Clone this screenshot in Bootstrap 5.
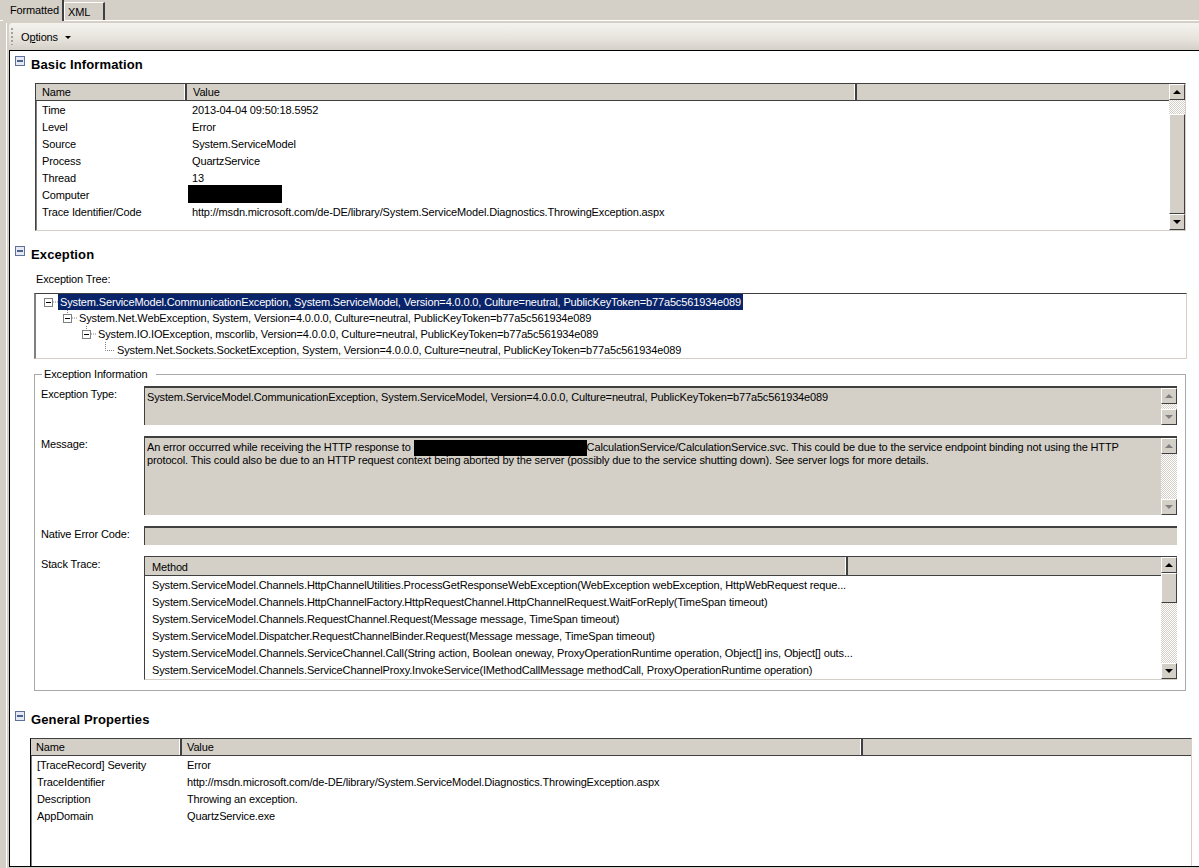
<!DOCTYPE html>
<html lang="en">

<head>
    <meta charset="UTF-8">
    <meta name="viewport" content="width=device-width, initial-scale=1.0">
    <title>Trace Viewer</title>
    <link href="https://cdn.jsdelivr.net/npm/bootstrap@5.3.0/dist/css/bootstrap.min.css" rel="stylesheet">
    <style>
        html, body { height: 100%; }
        body { background: #d4d0c8; color: #000; font-family: "Liberation Sans", Arial, sans-serif; font-size: 11px; letter-spacing: -.14px; line-height: 14px; overflow: hidden; }

        /* tabs and toolbar */
        .tab-strip { height: 21px; padding-left: 3px; border-bottom: 1px solid #fff; }
        .tab-a { width: 61px; height: 21px; padding: 3px 0 0 7px; border-right: 2px solid #404040; background: #d4d0c8; margin-bottom: -1px; }
        .tab-b { width: 41px; height: 18px; margin-top: 2px; padding: 2px 0 0 3px; border-left: 1px solid #fff; border-top: 1px solid #fff; border-right: 2px solid #404040; }
        .shell { height: 847px; padding-left: 6px; }
        .shell-in { border-left: 1px solid #fff; padding-left: 2px; height: 100%; }
        .tool-bar { height: 27px; margin-top: 2px; padding-left: 2px; background: linear-gradient(#f4f3ee, #e6e3dc 60%, #d4d0c8); border-radius: 3px 0 0 3px; }
        .tool-grip { width: 2px; height: 17px; margin-right: 8px; background: repeating-linear-gradient(#a5a29a 0 2px, transparent 2px 4px); }
        .caret-dn { width: 0; height: 0; margin: 2px 0 0 7px; border-left: 3px solid transparent; border-right: 3px solid transparent; border-top: 3px solid #000; }

        /* white panel */
        .pane { height: 817px; background: #fff; border-top: 1px solid #000; border-left: 1px solid #000; border-bottom: 1px solid #000; }
        .sec-head { height: 18px; margin-left: 5px; font-size: 13px; font-weight: 700; letter-spacing: .12px; line-height: 18px; }
        .sec-head svg { margin-right: 6px; margin-top: -8px; }
        .sec-1 { margin-top: 5px; }
        .sec-2 { margin-top: 15px; }
        .sec-3 { margin-top: 20px; }

        /* list views */
        .grid-box { border: 1px solid #d4d0c8; border-top-color: #404040; border-left-color: #404040; box-shadow: inset 1px 0 0 #808080; background: #fff; }
        .grid-basic { width: 1151px; height: 148px; margin: 9px 0 0 25px; }
        .grid-gen { width: 1162px; height: 129px; margin: 9px 0 0 20px; border-left-color: #000; border-bottom: 0; }
        .grid-tbl { table-layout: fixed; width: 100%; border-collapse: collapse; }
        .grid-tbl th { height: 16px; padding: 1px 0 0 6px; font-weight: 400; background: #d4d0c8; border-bottom: 1px solid #404040; border-right: 2px solid #404040; box-shadow: inset -1px 0 0 #fff; }
        .grid-tbl th:last-child { border-right: 0; box-shadow: none; }
        .grid-tbl td { height: 17px; padding: 2px 0 0 6px; white-space: nowrap; }
        .grid-gen .grid-tbl th { padding-left: 5px; }
        .redact { display: inline-block; background: #000; vertical-align: top; }
        .redact-pc { width: 94px; height: 18px; margin: -3px 0 -3px -4px; }
        .redact-msg { width: 173px; height: 16px; margin: -1px 0 -2px; }

        /* scrollbars */
        .scroll-v { width: 16px; flex: 0 0 16px; }
        .sb-btn { height: 16px; flex: 0 0 16px; background: #d4d0c8; border: 1px solid; border-color: #fff #404040 #404040 #fff; }
        .sb-thumb { background: #d4d0c8; border: 1px solid; border-color: #fff #404040 #404040 #fff; }
        .sb-track { background-color: #fff; background-image: conic-gradient(#d4d0c8 25%, #fff 0 50%, #d4d0c8 0 75%, #fff 0); background-size: 2px 2px; }
        .arr-up { width: 0; height: 0; border-left: 4px solid transparent; border-right: 4px solid transparent; border-bottom: 4px solid #000; }
        .arr-dn { width: 0; height: 0; border-left: 4px solid transparent; border-right: 4px solid transparent; border-top: 4px solid #000; }
        .sb-off .arr-up { border-bottom-color: #808080; }
        .sb-off .arr-dn { border-top-color: #808080; }

        /* exception tree */
        .tree-label { height: 14px; margin: 8px 0 0 26px; }
        .tree-box { width: 1153px; height: 66px; margin: 7px 0 0 24px; padding-top: 0; border: 1px solid #d4d0c8; border-top: 1px solid #404040; border-left: 2px solid #808080; }
        .tree-row { height: 16px; line-height: 16px; white-space: nowrap; }
        .tree-row svg { flex: 0 0 17px; }
        .tree-txt { padding: 0 2px; }
        .tree-sel { background: #0a246a; color: #fff; }
        .lvl-0 { padding-left: 5px; }
        .lvl-1 { padding-left: 24px; }
        .lvl-2 { padding-left: 43px; }
        .lvl-3 { padding-left: 62px; }

        /* exception information */
        .info-set { width: 1152px; height: 324px; margin: 8px 0 0 24px; padding: 5px 8px 0 6px; border: 1px solid #a9a9a9; min-width: 0; }
        .info-set legend { float: none; width: auto; margin: 0 0 0 1px; padding: 0 9px 0 2px; font-size: 11px; line-height: 14px; }
        .info-rows { gap: 11px; }
        .info-key { width: 103px; flex: 0 0 103px; padding-top: 1px; }
        .field-ro { background: #d4d0c8; border-top: 2px solid #404040; border-left: 1px solid #404040; }
        .field-txt { padding: 3px 0 0 2px; line-height: 13px; }
        .h-type { height: 39px; }
        .h-msg { height: 79px; }
        .h-code { height: 19px; }
        .h-stack { height: 124px; }
        .stack-box { border-top: 1px solid #404040; border-left: 1px solid #404040; border-bottom: 1px solid #d4d0c8; }
        .stack-box .grid-tbl th { height: 18px; padding: 2px 0 0 7px; }
        .stack-box .grid-tbl td { padding-left: 7px; }
    </style>
</head>

<body>
    <!-- tabs -->
    <ul class="nav tab-strip flex-nowrap">
        <li class="tab-a">Formatted</li>
        <li class="tab-b">XML</li>
    </ul>

    <div class="shell">
        <div class="shell-in">
            <!-- toolbar -->
            <div class="tool-bar d-flex align-items-center">
                <span class="tool-grip"></span>
                <span>O<u>p</u>tions</span>
                <span class="caret-dn"></span>
            </div>

            <div class="pane overflow-hidden">
                <!-- Basic Information -->
                <div class="sec-head sec-1 d-flex align-items-center">
                    <svg width="10" height="10" viewBox="0 0 10 10"><rect x=".5" y=".5" width="9" height="9" fill="#e4e9f4" stroke="#5f7199"/><rect x="2" y="4" width="6" height="2" fill="#4c6291"/></svg>
                    Basic Information
                </div>
                <div class="grid-box grid-basic d-flex">
                    <div class="flex-grow-1 overflow-hidden">
                        <table class="grid-tbl">
                            <colgroup><col style="width:150px"><col style="width:670px"><col></colgroup>
                            <thead><tr><th>Name</th><th>Value</th><th></th></tr></thead>
                            <tbody>
                                <tr><td>Time</td><td>2013-04-04 09:50:18.5952</td><td></td></tr>
                                <tr><td>Level</td><td>Error</td><td></td></tr>
                                <tr><td>Source</td><td>System.ServiceModel</td><td></td></tr>
                                <tr><td>Process</td><td>QuartzService</td><td></td></tr>
                                <tr><td>Thread</td><td>13</td><td></td></tr>
                                <tr><td>Computer</td><td><span class="redact redact-pc"></span></td><td></td></tr>
                                <tr><td>Trace Identifier/Code</td><td>http://msdn.microsoft.com/de-DE/library/System.ServiceModel.Diagnostics.ThrowingException.aspx</td><td></td></tr>
                            </tbody>
                        </table>
                    </div>
                    <div class="scroll-v d-flex flex-column">
                        <div class="sb-btn d-flex align-items-center justify-content-center"><span class="arr-up"></span></div>
                        <div class="sb-track" style="height:14px"></div>
                        <div class="sb-thumb flex-grow-1"></div>
                        <div class="sb-btn d-flex align-items-center justify-content-center"><span class="arr-dn"></span></div>
                    </div>
                </div>

                <!-- Exception -->
                <div class="sec-head sec-2 d-flex align-items-center">
                    <svg width="10" height="10" viewBox="0 0 10 10"><rect x=".5" y=".5" width="9" height="9" fill="#e4e9f4" stroke="#5f7199"/><rect x="2" y="4" width="6" height="2" fill="#4c6291"/></svg>
                    Exception
                </div>
                <div class="tree-label">Exception Tree:</div>
                <div class="tree-box">
                    <div class="tree-row lvl-0 d-flex">
                        <svg width="17" height="16" viewBox="0 0 17 16"><path d="M12 8h5" stroke="#808080" stroke-dasharray="1 1"/><rect x="3.5" y="4.5" width="8" height="8" fill="#fff" stroke="#808080"/><path d="M5 8.5h5" stroke="#000"/></svg>
                        <span class="tree-txt tree-sel">System.ServiceModel.CommunicationException, System.ServiceModel, Version=4.0.0.0, Culture=neutral, PublicKeyToken=b77a5c561934e089</span>
                    </div>
                    <div class="tree-row lvl-1 d-flex">
                        <svg width="17" height="16" viewBox="0 0 17 16"><path d="M7.5 0v4M12 8h5" stroke="#808080" stroke-dasharray="1 1"/><rect x="3.5" y="4.5" width="8" height="8" fill="#fff" stroke="#808080"/><path d="M5 8.5h5" stroke="#000"/></svg>
                        <span class="tree-txt">System.Net.WebException, System, Version=4.0.0.0, Culture=neutral, PublicKeyToken=b77a5c561934e089</span>
                    </div>
                    <div class="tree-row lvl-2 d-flex">
                        <svg width="17" height="16" viewBox="0 0 17 16"><path d="M7.5 0v4M12 8h5" stroke="#808080" stroke-dasharray="1 1"/><rect x="3.5" y="4.5" width="8" height="8" fill="#fff" stroke="#808080"/><path d="M5 8.5h5" stroke="#000"/></svg>
                        <span class="tree-txt">System.IO.IOException, mscorlib, Version=4.0.0.0, Culture=neutral, PublicKeyToken=b77a5c561934e089</span>
                    </div>
                    <div class="tree-row lvl-3 d-flex">
                        <svg width="17" height="16" viewBox="0 0 17 16"><path d="M7.5 0v8.5H17" fill="none" stroke="#808080" stroke-dasharray="1 1"/></svg>
                        <span class="tree-txt">System.Net.Sockets.SocketException, System, Version=4.0.0.0, Culture=neutral, PublicKeyToken=b77a5c561934e089</span>
                    </div>
                </div>

                <fieldset class="info-set">
                    <legend>Exception Information</legend>
                    <div class="info-rows d-flex flex-column">
                        <div class="d-flex">
                            <div class="info-key">Exception Type:</div>
                            <div class="field-ro h-type flex-grow-1 d-flex">
                                <div class="field-txt flex-grow-1">System.ServiceModel.CommunicationException, System.ServiceModel, Version=4.0.0.0, Culture=neutral, PublicKeyToken=b77a5c561934e089</div>
                                <div class="scroll-v sb-off d-flex flex-column">
                                    <div class="sb-btn d-flex align-items-center justify-content-center"><span class="arr-up"></span></div>
                                    <div class="sb-track flex-grow-1"></div>
                                    <div class="sb-btn d-flex align-items-center justify-content-center"><span class="arr-dn"></span></div>
                                </div>
                            </div>
                        </div>
                        <div class="d-flex">
                            <div class="info-key">Message:</div>
                            <div class="field-ro h-msg flex-grow-1 d-flex">
                                <div class="field-txt flex-grow-1">An error occurred while receiving the HTTP response to <span class="redact redact-msg"></span>CalculationService/CalculationService.svc. This could be due to the service endpoint binding not using the HTTP<br>protocol. This could also be due to an HTTP request context being aborted by the server (possibly due to the service shutting down). See server logs for more details.</div>
                                <div class="scroll-v sb-off d-flex flex-column">
                                    <div class="sb-btn d-flex align-items-center justify-content-center"><span class="arr-up"></span></div>
                                    <div class="sb-track flex-grow-1"></div>
                                    <div class="sb-btn d-flex align-items-center justify-content-center"><span class="arr-dn"></span></div>
                                </div>
                            </div>
                        </div>
                        <div class="d-flex">
                            <div class="info-key">Native Error Code:</div>
                            <div class="field-ro h-code flex-grow-1"></div>
                        </div>
                        <div class="d-flex">
                            <div class="info-key">Stack Trace:</div>
                            <div class="stack-box h-stack flex-grow-1 d-flex overflow-hidden">
                                <div class="flex-grow-1 overflow-hidden">
                                    <table class="grid-tbl">
                                        <colgroup><col style="width:702px"><col></colgroup>
                                        <thead><tr><th>Method</th><th></th></tr></thead>
                                        <tbody>
                                            <tr><td>System.ServiceModel.Channels.HttpChannelUtilities.ProcessGetResponseWebException(WebException webException, HttpWebRequest reque...</td><td></td></tr>
                                            <tr><td>System.ServiceModel.Channels.HttpChannelFactory.HttpRequestChannel.HttpChannelRequest.WaitForReply(TimeSpan timeout)</td><td></td></tr>
                                            <tr><td>System.ServiceModel.Channels.RequestChannel.Request(Message message, TimeSpan timeout)</td><td></td></tr>
                                            <tr><td>System.ServiceModel.Dispatcher.RequestChannelBinder.Request(Message message, TimeSpan timeout)</td><td></td></tr>
                                            <tr><td>System.ServiceModel.Channels.ServiceChannel.Call(String action, Boolean oneway, ProxyOperationRuntime operation, Object[] ins, Object[] outs...</td><td></td></tr>
                                            <tr><td>System.ServiceModel.Channels.ServiceChannelProxy.InvokeService(IMethodCallMessage methodCall, ProxyOperationRuntime operation)</td><td></td></tr>
                                        </tbody>
                                    </table>
                                </div>
                                <div class="scroll-v d-flex flex-column">
                                    <div class="sb-btn d-flex align-items-center justify-content-center"><span class="arr-up"></span></div>
                                    <div class="sb-thumb" style="height:30px"></div>
                                    <div class="sb-track flex-grow-1"></div>
                                    <div class="sb-btn d-flex align-items-center justify-content-center"><span class="arr-dn"></span></div>
                                </div>
                            </div>
                        </div>
                    </div>
                </fieldset>

                <!-- General Properties -->
                <div class="sec-head sec-3 d-flex align-items-center">
                    <svg width="10" height="10" viewBox="0 0 10 10"><rect x=".5" y=".5" width="9" height="9" fill="#e4e9f4" stroke="#5f7199"/><rect x="2" y="4" width="6" height="2" fill="#4c6291"/></svg>
                    General Properties
                </div>
                <div class="grid-box grid-gen">
                    <table class="grid-tbl">
                        <colgroup><col style="width:150px"><col style="width:681px"><col></colgroup>
                        <thead><tr><th>Name</th><th>Value</th><th></th></tr></thead>
                        <tbody>
                            <tr><td>[TraceRecord] Severity</td><td>Error</td><td></td></tr>
                            <tr><td>TraceIdentifier</td><td>http://msdn.microsoft.com/de-DE/library/System.ServiceModel.Diagnostics.ThrowingException.aspx</td><td></td></tr>
                            <tr><td>Description</td><td>Throwing an exception.</td><td></td></tr>
                            <tr><td>AppDomain</td><td>QuartzService.exe</td><td></td></tr>
                        </tbody>
                    </table>
                </div>
            </div>
        </div>
    </div>
    <script src="https://cdn.jsdelivr.net/npm/bootstrap@5.3.0/dist/js/bootstrap.bundle.min.js"></script>
</body>

</html>
